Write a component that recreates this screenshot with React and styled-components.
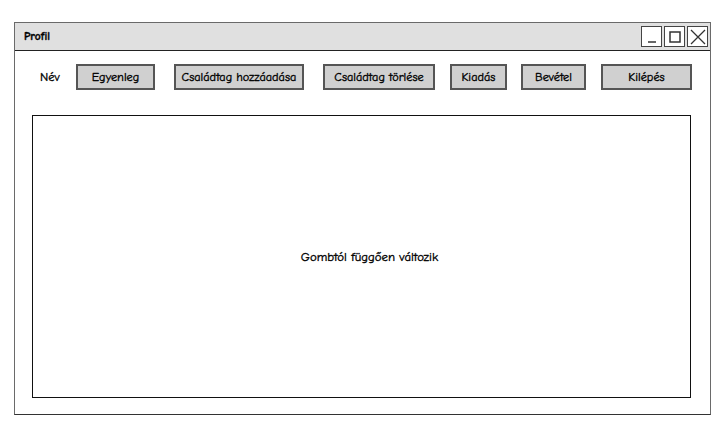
import React from 'react'
import styled, { createGlobalStyle } from 'styled-components'

const Global = createGlobalStyle`
  body {
    margin: 0;
    background: #fff;
    font-family: "Comic Neue", "DejaVu Sans", "Liberation Sans", sans-serif;
    color: #000;
    -webkit-text-stroke: 0.35px #000;
  }
`

const Page = styled.div`
    width: 727px;
    height: 433px;
    padding: 22px 0 0 14px;
    box-sizing: border-box;
`

const Window = styled.div`
    width: 697px;
    height: 393px;
    border: 1.5px solid #6a6a6a;
    border-bottom-color: #333;
    box-sizing: border-box;
    display: flex;
    flex-direction: column;
`

const TitleBar = styled.div`
    height: 27px;
    background: #e0e0e0;
    border-bottom: 1px solid #222;
    display: flex;
    align-items: center;
    padding: 0 2px 0 9px;
`

const Title = styled.div`
    flex: 1;
    font-size: 11.5px;
    font-weight: bold;
`

const Ctrl = styled.div`
    width: 21px;
    height: 21px;
    border: 1.5px solid #444;
    box-sizing: border-box;
    margin-left: 2px;
    background: #fff;
    display: flex;
    align-items: center;
    justify-content: center;
`

const Toolbar = styled.div`
    display: flex;
    align-items: center;
    padding: 12px 0 0 25px;
    height: 27px;
`

const Label = styled.span`
    font-size: 12.5px;
    width: 36px;
`

const Button = styled.div`
    width: ${p => p.$w}px;
    margin-left: ${p => p.$ml || 0}px;
    height: 26px;
    box-sizing: border-box;
    border: 2px solid #555;
    background: #d0d0d0;
    display: flex;
    align-items: center;
    justify-content: center;
    font-size: 12.3px;
    white-space: nowrap;
`

const Panel = styled.div`
    margin: 25px 0 0 17px;
    width: 659px;
    height: 283px;
    box-sizing: border-box;
    border: 1px solid #111;
    display: flex;
    align-items: center;
    justify-content: center;
    padding-left: 16px;
    font-size: 12.8px;
`

const buttons = [
    { t: 'Egyenleg', w: 79, ml: 0 },
    { t: 'Családtag hozzáadása', w: 130, ml: 19 },
    { t: 'Családtag törlése', w: 112, ml: 19 },
    { t: 'Kiadás', w: 57, ml: 15 },
    { t: 'Bevétel', w: 65, ml: 14 },
    { t: 'Kilépés', w: 91, ml: 15 },
]

const App = () => {
    return (
        <Page>
            <Global />
            <Window>
                <TitleBar>
                    <Title>Profil</Title>
                    <Ctrl>
                        <svg width="14" height="14" viewBox="0 0 14 14"><path d="M3 12 H11" stroke="#333" strokeWidth="1.5" /></svg>
                    </Ctrl>
                    <Ctrl>
                        <svg width="14" height="14" viewBox="0 0 14 14"><rect x="2" y="2" width="10" height="10" fill="none" stroke="#333" strokeWidth="1.5" /></svg>
                    </Ctrl>
                    <Ctrl>
                        <svg width="16" height="16" viewBox="0 0 16 16"><path d="M1 1 L15 15 M15 1 L1 15" stroke="#333" strokeWidth="1.3" /></svg>
                    </Ctrl>
                </TitleBar>
                <Toolbar>
                    <Label>Név</Label>
                    {buttons.map(b => (
                        <Button key={b.t} $w={b.w} $ml={b.ml}>{b.t}</Button>
                    ))}
                </Toolbar>
                <Panel>Gombtól függően változik</Panel>
            </Window>
        </Page>
    )
}

export default App
